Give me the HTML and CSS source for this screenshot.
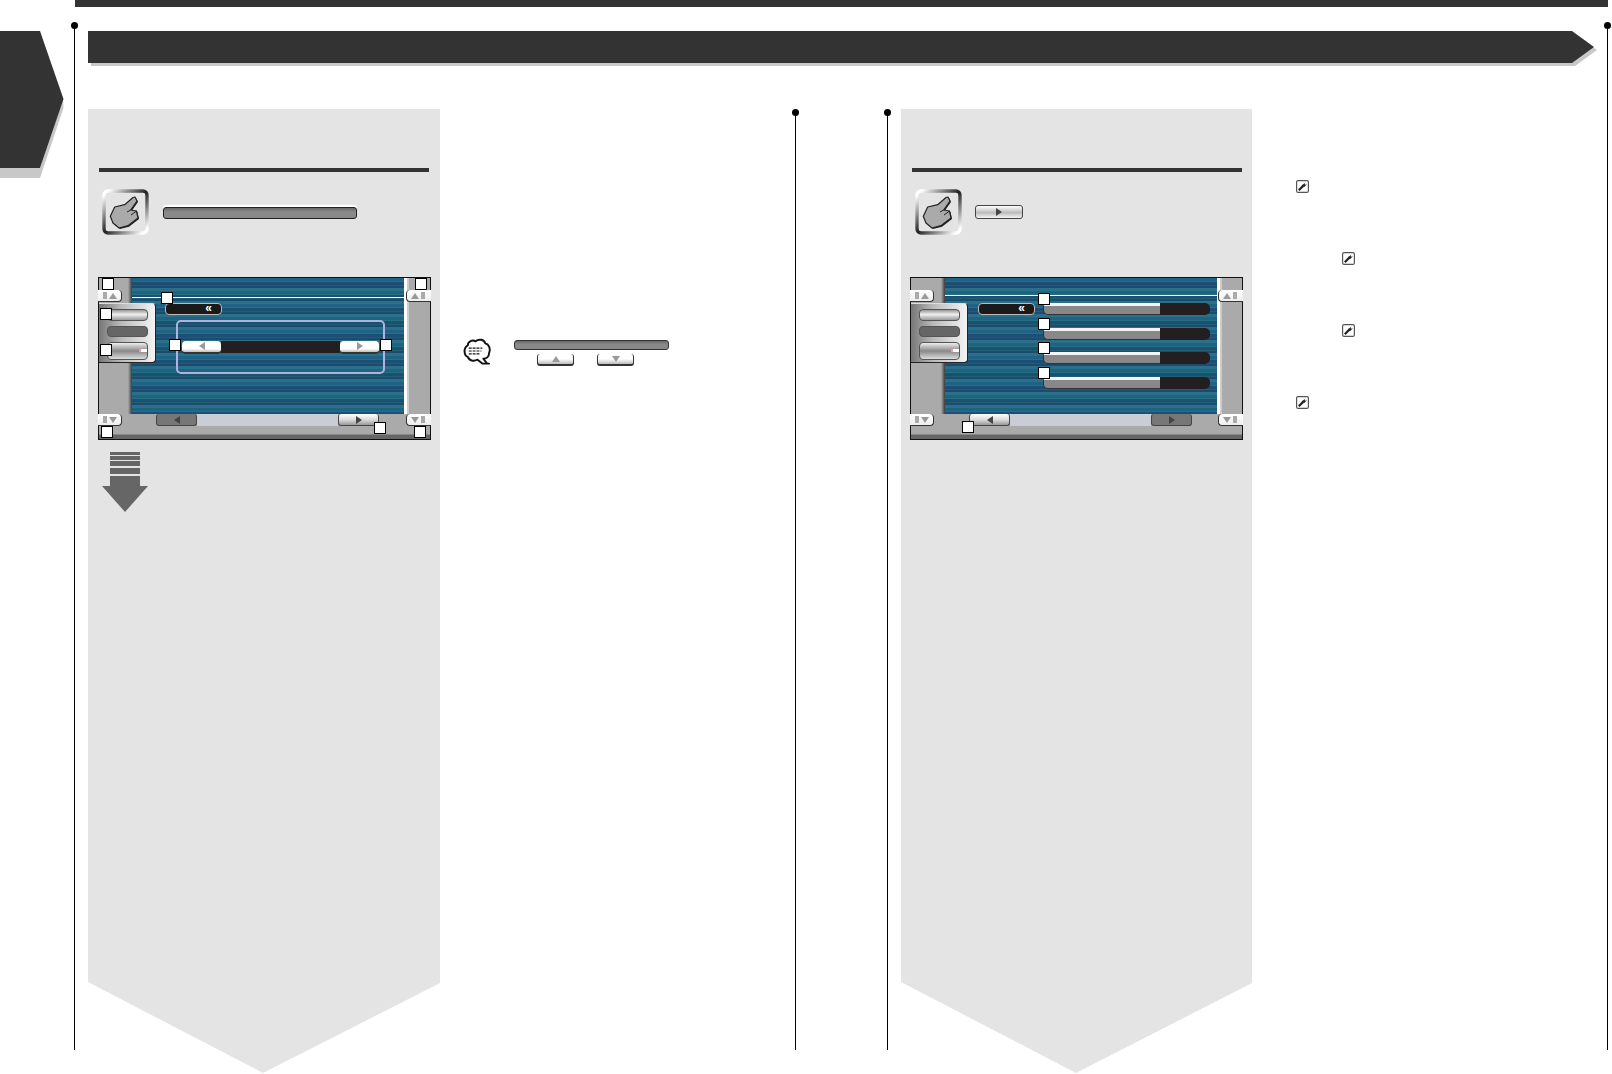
FILE: index.html
```html
<!DOCTYPE html>
<html lang="en">
<head>
    <meta charset="UTF-8">
    <title>Setup</title>
    <link rel="stylesheet" href="styles.css">
</head>
<body>
    <svg class="defs">
        <defs>
            <linearGradient id="edge" x1="0" y1="0" x2="1" y2="1">
                <stop offset="0.05" stop-color="#fff"/>
                <stop offset="0.5" stop-color="#222"/>
                <stop offset="0.95" stop-color="#fff"/>
            </linearGradient>
            <symbol id="hand" viewBox="0 0 47 46">
                <rect x="2" y="2" width="43" height="42" rx="4" fill="none" stroke="url(#edge)" stroke-width="3.4"/>
                <path d="M32 9.5 L34 9 L36 13 L29.7 22 L35.5 23 L37 30 L27 37.7 L18 40 L12 35 Z" fill="#222"/>
                <path d="M31 8.5 L33 8 L35 12 L28.7 21 L34.5 22 L36 29 L26 36.7 L17 39 L11 34 L8.3 27.3 L12.7 18 L22.7 15.7 Z" fill="#aaa" stroke="#222" stroke-width="1.2" stroke-linejoin="round"/>
                <path d="M28.7 21 L25 23 M34.5 22 L29 26" fill="none" stroke="#222" stroke-width="1"/>
            </symbol>
            <symbol id="wrench" viewBox="0 0 13 13">
                <rect x="0.6" y="0.6" width="11.8" height="11.8" rx="1.5" fill="#fff" stroke="#555" stroke-width="1.2"/>
                <path d="M2.8 10.2 L7.6 5.4" fill="none" stroke="#222" stroke-width="2.2"/>
                <path d="M6.4 5 L9.4 2.4 L8.6 4 L9.4 4.8 L10.9 4 L8.4 7 Z" fill="#222"/>
            </symbol>
        </defs>
    </svg>

    <div class="topbar"></div>

    <div class="sheet">
        <div class="side">
            <svg class="tab" width="66" height="147" viewBox="0 0 66 147">
                <polygon points="0,137 40,137 63,68 63.5,77 40,147 0,147" fill="#c8c8c8"/>
                <polygon points="0,0 40,0 63.5,68 40,137 0,137" fill="#333"/>
            </svg>
        </div>

        <div class="spread">
            <svg class="title" width="1512" height="36" viewBox="0 0 1512 36">
                <polygon points="3,3 1487,3 1509,19 1487,35 3,35" fill="#c8c8c8"/>
                <polygon points="0,0 1484,0 1506,16 1484,32 0,32" fill="#333"/>
            </svg>

            <div class="columns">
                <!-- left page -->
                <section class="col col-left">
                    <div class="panel">
                        <div class="rule"></div>
                        <div class="touch">
                            <svg class="hand"><use href="#hand"/></svg>
                            <div class="bar bar-long"></div>
                        </div>

                        <div class="screen">
                            <div class="edge-l"></div>
                            <div class="blue">
                                <div class="hairline"></div>
                                <div class="back">«</div>
                                <div class="frame">
                                    <div class="key-white"><i class="tri tri-l"></i></div>
                                    <div class="value"></div>
                                    <div class="key-white"><i class="tri tri-r"></i></div>
                                </div>
                            </div>
                            <div class="edge-r"></div>
                            <div class="nav">
                                <div class="nav-key dim"><i class="tri tri-dark-l"></i></div>
                                <div class="track"></div>
                                <div class="nav-key"><i class="tri tri-dark-r"></i></div>
                            </div>

                            <div class="corner c-tl"><i class="tri tri-u"></i></div>
                            <div class="corner c-tr"><i class="tri tri-u"></i></div>
                            <div class="corner c-bl"><i class="tri tri-d"></i></div>
                            <div class="corner c-br"><i class="tri tri-d"></i></div>

                            <div class="menu">
                                <div class="menu-btn"></div>
                                <div class="menu-btn off"></div>
                                <div class="menu-btn tall"><i class="ret"></i></div>
                            </div>

                            <b class="mark a1"></b><b class="mark a2"></b><b class="mark a3"></b>
                            <b class="mark a4"></b><b class="mark a5"></b><b class="mark a6"></b>
                            <b class="mark a7"></b><b class="mark a8"></b><b class="mark a9"></b>
                            <b class="mark a10"></b>
                        </div>

                        <div class="down">
                            <span class="d1"></span><span class="d2"></span><span class="d3"></span><span class="d4"></span>
                            <span class="d5"></span>
                            <span class="head"></span>
                        </div>
                    </div>

                    <div class="note">
                        <svg class="bubble" width="29" height="28" viewBox="0 0 30 28">
                            <path d="M5 7 C5 3 10 1 13 3 C16 0 22 1 23 5 C27 6 29 11 27 15 C27 19 24 21 21 21 L25 26 L27 26 L20 26 L15 22 C11 24 6 23 5 19 C1 18 0 10 5 7 Z" fill="#fff" stroke="#111" stroke-width="2" stroke-linejoin="round"/>
                            <path d="M6 10 H20 M6 13 H19 M6 16 H18" fill="none" stroke="#111" stroke-width="1.2" stroke-dasharray="3 1"/>
                        </svg>
                        <div class="note-body">
                            <div class="bar bar-note"></div>
                            <div class="small-keys">
                                <div class="small-key"><i class="tri tri-u"></i></div>
                                <div class="small-key"><i class="tri tri-d"></i></div>
                            </div>
                        </div>
                    </div>
                </section>

                <!-- right page -->
                <section class="col col-right">
                    <div class="panel panel-r">
                        <div class="rule"></div>
                        <div class="touch">
                            <svg class="hand"><use href="#hand"/></svg>
                            <div class="play"><i class="tri tri-dark-r"></i></div>
                        </div>

                        <div class="screen">
                            <div class="edge-l"></div>
                            <div class="blue">
                                <div class="hairline"></div>
                                <div class="blue-row">
                                    <div class="back">«</div>
                                    <div class="rows">
                                        <div class="row"><div class="fill"></div><div class="val"></div></div>
                                        <div class="row"><div class="fill"></div><div class="val"></div></div>
                                        <div class="row"><div class="fill"></div><div class="val"></div></div>
                                        <div class="row"><div class="fill"></div><div class="val"></div></div>
                                    </div>
                                </div>
                            </div>
                            <div class="edge-r"></div>
                            <div class="nav">
                                <div class="nav-key"><i class="tri tri-dark-l"></i></div>
                                <div class="track"></div>
                                <div class="nav-key dim"><i class="tri tri-dark-r"></i></div>
                            </div>

                            <div class="corner c-tl"><i class="tri tri-u"></i></div>
                            <div class="corner c-tr"><i class="tri tri-u"></i></div>
                            <div class="corner c-bl"><i class="tri tri-d"></i></div>
                            <div class="corner c-br"><i class="tri tri-d"></i></div>

                            <div class="menu">
                                <div class="menu-btn"></div>
                                <div class="menu-btn off"></div>
                                <div class="menu-btn tall"><i class="ret"></i></div>
                            </div>

                            <b class="mark b1"></b><b class="mark b2"></b><b class="mark b3"></b>
                            <b class="mark b4"></b><b class="mark b5"></b>
                        </div>
                    </div>

                    <div class="tools">
                        <svg class="wrench"><use href="#wrench"/></svg>
                        <svg class="wrench in"><use href="#wrench"/></svg>
                        <svg class="wrench in"><use href="#wrench"/></svg>
                        <svg class="wrench"><use href="#wrench"/></svg>
                    </div>
                </section>
            </div>
        </div>
    </div>
</body>
</html>
```

FILE: styles.css
```css
*{
    margin: 0;
    padding: 0;
    box-sizing: border-box;
}
html,body{
    width: 1612px;
    height: 1074px;
    overflow: hidden;
    background: #fff;
    font-family: "Liberation Sans", Arial, sans-serif;
}
.defs{
    position: absolute;
    width: 0;
    height: 0;
}
i,b{
    display: block;
}

/* page frame */
.topbar{
    width: 1533px;
    height: 7px;
    margin-left: 75px;
    background: #333;
}
.sheet{
    display: flex;
    margin-top: 18px;
}
.side{
    width: 74px;
    padding-top: 6px;
}
.tab,.title{
    display: block;
}
.spread{
    position: relative;
    width: 1534px;
    height: 1025px;
    padding-top: 6px;
    border-left: 1px solid #000;
    border-right: 1px solid #000;
}
.spread::before,.spread::after,.col::before{
    content: "";
    position: absolute;
    top: -3px;
    width: 7px;
    height: 7px;
    border-radius: 50%;
    background: #000;
}
.spread::before{
    left: -4px;
}
.spread::after{
    right: -4px;
}
.title{
    margin-left: 13px;
}
.columns{
    display: flex;
    justify-content: space-between;
    margin-top: 45px;
}
.col{
    position: relative;
    display: flex;
    height: 938px;
}
.col-left{
    width: 721px;
    padding-left: 13px;
    border-right: 1px solid #000;
}
.col-left::before{
    right: -4px;
}
.col-right{
    width: 720px;
    padding-left: 13px;
    border-left: 1px solid #000;
}
.col-right::before{
    left: -4px;
}

/* grey panel */
.panel{
    flex: none;
    width: 352px;
    height: 964px;
    margin-top: -3px;
    padding: 59px 0 0 10px;
    background: #e4e4e4;
    clip-path: polygon(0 0, 100% 0, 100% 874px, 175px 100%, 0 873px);
}
.panel-r{
    width: 351px;
    padding-left: 9px;
}
.rule{
    width: 330px;
    height: 4px;
    margin-left: 1px;
    background: #333;
}
.panel-r .rule{
    width: 330px;
    margin-left: 2px;
}
.touch{
    display: flex;
    align-items: center;
    gap: 14px;
    height: 46px;
    margin: 17px 0 42px 4px;
}
.panel-r .touch{
    gap: 13px;
    margin-left: 5px;
}
.hand{
    flex: none;
    width: 47px;
    height: 46px;
}
.bar{
    height: 12px;
    border: 1px solid #222;
    border-radius: 3px;
    background: linear-gradient(#666, #8a8a8a 40%, #888);
    box-shadow: 0 -2px 0 #fff;
}
.bar-long{
    width: 194px;
    margin-top: 2px;
}
.play{
    display: flex;
    align-items: center;
    justify-content: center;
    width: 48px;
    height: 14px;
    border: 1px solid #444;
    border-radius: 3px;
    background: linear-gradient(#fff, #bbb 55%, #f4f4f4);
}

/* device screen */
.screen{
    position: relative;
    display: grid;
    grid-template-columns: 33px 272px 1fr;
    grid-template-rows: 136px 25px;
    width: 333px;
    height: 163px;
    border: 1px solid #111;
    background: #aaa;
}
.panel-r .screen{
    grid-template-columns: 34px 272px 1fr;
}
.edge-l{
    background: linear-gradient(90deg, #aaa 0, #aaa 29px, #3c3c3c);
}
.panel-r .edge-l{
    background: linear-gradient(90deg, #aaa 0, #aaa 30px, #3c3c3c);
}
.edge-r{
    background: linear-gradient(90deg, #fff 0, #fff 3px, #ccc 3px, #ccc 5px, #aaa 5px);
}
.blue{
    background: repeating-linear-gradient(180deg,
        #1f6384 0, #1f6384 3px,
        #26707f 3px, #26707f 4px,
        #1b4f74 4px, #1b4f74 7px,
        #205f6f 7px, #205f6f 8px,
        #1d4a6e 8px, #1d4a6e 10px,
        #2a7088 10px, #2a7088 13px);
}
.hairline{
    height: 1px;
    margin-top: 19px;
    background: #fff;
}
.panel-r .hairline{
    margin-top: 17px;
}
.back{
    flex: none;
    width: 57px;
    height: 12px;
    margin: 5px 0 0 33px;
    padding-right: 9px;
    border: 1px solid #bbb;
    border-radius: 4px;
    background: #1a1a1a;
    color: #fff;
    font-size: 12px;
    font-weight: bold;
    line-height: 9px;
    text-align: right;
}
.frame{
    display: flex;
    align-items: center;
    width: 209px;
    height: 54px;
    margin: 5px 0 0 44px;
    padding: 0 4px;
    border: 2px solid #aeb3e0;
    border-radius: 5px;
}
.key-white{
    display: flex;
    align-items: center;
    justify-content: center;
    flex: none;
    width: 39px;
    height: 13px;
    border-bottom: 2px solid #333;
    border-radius: 4px;
    background: linear-gradient(#fff 70%, #bbb);
}
.value{
    flex: 1;
    height: 12px;
    background: #231f20;
}
.blue-row{
    display: flex;
}
.panel-r .back{
    margin-top: 7px;
}
.rows{
    display: flex;
    flex-direction: column;
    gap: 12.5px;
    margin: 7px 0 0 8px;
}
.row{
    display: flex;
    width: 167px;
    height: 12px;
}
.fill{
    width: 117px;
    border-top: 3px solid #f4f4f4;
    border-bottom: 1px solid #333;
    border-left: 1px solid #333;
    border-bottom-left-radius: 5px;
    background: #888;
}
.val{
    flex: 1;
    border-radius: 0 5px 5px 0;
    background: #231f20;
}

/* bottom bar of the screen */
.nav{
    grid-column: 1 / 4;
    display: flex;
    height: 25px;
    padding-left: 57px;
    background: linear-gradient(#aaa 0, #aaa 20px, #666 21px, #666);
}
.panel-r .nav{
    padding-left: 58px;
}
.nav-key{
    display: flex;
    align-items: center;
    justify-content: center;
    flex: none;
    width: 41px;
    height: 12px;
    border: 1px solid #444;
    border-top: 0;
    border-radius: 3px;
    background: linear-gradient(#fff, #ddd 50%, #999);
}
.nav-key.dim{
    background: #777;
}
.track{
    width: 141px;
    height: 12px;
    background: #c9cdd6;
}

/* small triangles */
.tri{
    width: 0;
    height: 0;
    border-style: solid;
    border-color: transparent;
}
.tri-l,.tri-dark-l{
    border-width: 4px 6px 4px 0;
}
.tri-r,.tri-dark-r{
    border-width: 4px 0 4px 6px;
}
.tri-l{
    border-right-color: #999;
}
.tri-r{
    border-left-color: #999;
}
.tri-dark-l{
    border-right-color: #444;
}
.tri-dark-r{
    border-left-color: #444;
}
.tri-u{
    border-width: 0 4px 6px;
    border-bottom-color: #999;
}
.tri-d{
    border-width: 6px 4px 0;
    border-top-color: #999;
}

/* things lying over the screen */
.corner{
    position: absolute;
    display: flex;
    align-items: center;
    justify-content: flex-end;
    gap: 2px;
    width: 24px;
    height: 12px;
    padding: 0 4px;
    border-bottom: 1px solid #333;
    background: linear-gradient(#fff, #eee);
}
.corner::before{
    content: "";
    width: 4px;
    height: 7px;
    background: #aaa;
}
.c-tl,.c-bl{
    left: -1px;
    border-right: 1px solid #333;
    border-radius: 0 4px 4px 0;
}
.c-tr,.c-br{
    right: -1px;
    width: 25px;
    flex-direction: row-reverse;
    border-left: 1px solid #333;
    border-radius: 4px 0 0 4px;
}
.c-tl,.c-tr{
    top: 12px;
}
.c-bl,.c-br{
    top: 136px;
}
.menu{
    position: absolute;
    left: 0;
    top: 25px;
    display: flex;
    flex-direction: column;
    gap: 5px;
    width: 57px;
    height: 60px;
    padding: 5px 0 0 8px;
    border-top: 1px solid #ddd;
    border-right: 1px solid #222;
    border-bottom: 1px solid #222;
    border-radius: 0 4px 4px 0;
    background: linear-gradient(90deg, #777, #bbb 40%, #f4f4f4);
}
.menu-btn{
    position: relative;
    width: 41px;
    height: 12px;
    border: 1px solid #555;
    border-radius: 4px;
    background: linear-gradient(#999, #eee 45%, #999);
}
.menu-btn.off{
    height: 11px;
    background: #666;
}
.menu-btn.tall{
    height: 18px;
    background: linear-gradient(#eee, #888 50%, #ddd);
}
.ret{
    position: absolute;
    right: 0;
    top: 6px;
    width: 6px;
    height: 3px;
    background: #fff;
    box-shadow: -2px 0 0 #e0a0a0;
}
.mark{
    position: absolute;
    width: 12px;
    height: 12px;
    border: 1px solid #000;
    background: #fff;
}
.a1{ left: 3px; top: 0; }
.a2{ left: 316px; top: 0; }
.a3{ left: 1px; top: 30px; }
.a4{ left: 1px; top: 66px; }
.a5{ left: 62px; top: 14px; }
.a6{ left: 70px; top: 61px; }
.a7{ left: 281px; top: 61px; }
.a8{ left: 2px; top: 148px; }
.a9{ left: 275px; top: 144px; }
.a10{ left: 315px; top: 148px; }
.b1{ left: 127px; top: 15px; }
.b2{ left: 127px; top: 40px; }
.b3{ left: 127px; top: 64px; }
.b4{ left: 127px; top: 89px; }
.b5{ left: 51px; top: 143px; }

/* down arrow */
.down{
    display: flex;
    flex-direction: column;
    align-items: center;
    width: 46px;
    margin: 12px 0 0 4px;
}
.down span{
    width: 30px;
    background: #666;
}
.d1{ height: 3px; }
.d2{ height: 4px; margin-top: 1px; }
.d3{ height: 5px; margin-top: 1px; }
.d4{ height: 6px; margin-top: 2px; }
.d5{ height: 10px; margin-top: 2px; }
.down .head{
    width: 46px;
    height: 26px;
    background: #666;
    clip-path: polygon(0 0, 100% 0, 50% 100%);
}

/* columns beside the panels */
.note{
    display: flex;
    gap: 22px;
    padding: 226px 0 0 23px;
}
.bubble{
    flex: none;
    width: 29px;
    height: 28px;
}
.note-body{
    padding-top: 2px;
}
.bar-note{
    width: 155px;
    height: 10px;
    border-color: #333;
    box-shadow: none;
}
.small-keys{
    display: flex;
    gap: 23px;
    margin: 4px 0 0 23px;
}
.small-key{
    display: flex;
    align-items: center;
    justify-content: center;
    width: 37px;
    height: 12px;
    border: 1px solid #333;
    border-top: 0;
    border-bottom-width: 2px;
    border-radius: 3px;
    background: linear-gradient(#fff 50%, #bbb);
}
.tools{
    display: flex;
    flex-direction: column;
    align-items: flex-start;
    gap: 59px;
    padding: 68px 0 0 44px;
}
.wrench{
    width: 13px;
    height: 13px;
}
.wrench.in{
    margin-left: 46px;
}
```
